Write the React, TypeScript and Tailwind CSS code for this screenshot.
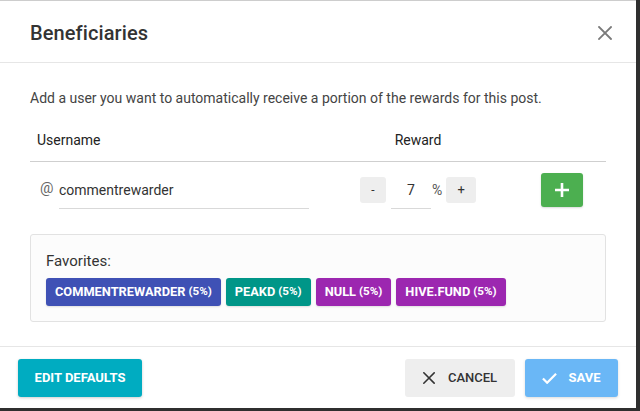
import { useState } from "react";

interface Favorite {
  name: string;
  weight: number;
  color: string;
}

const favorites: Favorite[] = [
  { name: "commentrewarder", weight: 5, color: "bg-[#3f51b5]" },
  { name: "peakd", weight: 5, color: "bg-[#009688]" },
  { name: "null", weight: 5, color: "bg-[#9c27b0]" },
  { name: "hive.fund", weight: 5, color: "bg-[#9c27b0]" },
];

const CloseIcon = ({ className }: { className?: string }) => (
  <svg viewBox="0 0 14 14" className={className} fill="none" stroke="currentColor" strokeWidth="1.8" strokeLinecap="square">
    <path d="M1 1 13 13M13 1 1 13" />
  </svg>
);

const App = () => {
  const [username, setUsername] = useState("commentrewarder");
  const [reward, setReward] = useState(7);

  return (
    <div className="w-[640px] h-[411px] bg-[#2f2f2f] font-['Roboto',sans-serif]">
      <div className="w-[636px] h-[408px] bg-white border-t border-[#cdcdcd] flex flex-col">
        {/* header */}
        <div className="h-[62px] shrink-0 flex items-center justify-between pl-[30px] pr-[23px] pt-[2px] border-b border-[#e6e6e6]">
          <h2 className="text-[20px] font-medium text-[#333] tracking-[0.1px]">Beneficiaries</h2>
          <button className="text-[#7a7a7a] w-[16px] h-[16px] flex items-center justify-center">
            <CloseIcon className="w-[14px] h-[14px]" />
          </button>
        </div>

        {/* body */}
        <div className="flex-1 px-[30px] pt-[25px]">
          <p className="text-[14px] leading-[20px] text-[#444]">
            Add a user you want to automatically receive a portion of the rewards for this post.
          </p>

          <div className="mt-[22px] flex text-[14px] leading-[20px] text-[#222] pb-[11px] border-b border-[#cfcfcf]">
            <div className="w-[330px] pl-[7px]">Username</div>
            <div className="w-[116px] text-center">Reward</div>
          </div>

          <div className="flex items-start h-[58px]">
            <div className="w-[330px] pl-[10px] pt-[18px] flex items-start">
              <span className="text-[15px] leading-[20px] text-[#666] w-[19px] -mt-[2px]">@</span>
              <input
                value={username}
                onChange={(e) => setUsername(e.target.value)}
                className="w-[250px] text-[14px] leading-[20px] text-[#333] pb-[8px] border-b border-[#d9d9d9] outline-none bg-transparent"
              />
            </div>
            <div className="pt-[15px] flex items-start">
              <button
                onClick={() => setReward(Math.max(0, reward - 1))}
                className="w-[26px] h-[26px] rounded-[3px] bg-[#eeeeee] text-[12px] text-[#333] flex items-center justify-center"
              >
                -
              </button>
              <div className="ml-[5px] w-[40px] h-[32px] border-b border-[#d9d9d9] flex justify-center pt-[3px]">
                <span className="text-[14px] leading-[20px] text-[#333]">{reward}</span>
              </div>
              <span className="ml-[1px] pt-[3px] text-[14px] leading-[20px] text-[#555]">%</span>
              <button
                onClick={() => setReward(Math.min(100, reward + 1))}
                className="ml-[4px] w-[30px] h-[26px] rounded-[3px] bg-[#eeeeee] text-[13px] text-[#333] flex items-center justify-center"
              >
                +
              </button>
            </div>
            <div className="pt-[11px] ml-[65px]">
              <button className="w-[42px] h-[34px] rounded-[3px] bg-[#4caf50] flex items-center justify-center shadow-[0_1px_2px_rgba(0,0,0,0.15)]">
                <svg viewBox="0 0 14 14" className="w-[14px] h-[14px]" fill="none" stroke="white" strokeWidth="2.6">
                  <path d="M7 0v14M0 7h14" />
                </svg>
              </button>
            </div>
          </div>

          <div className="mt-[14px] border border-[#e2e2e2] rounded-[3px] bg-[#fcfcfc] px-[15px] pt-[16px] pb-[15px]">
            <div className="text-[15px] leading-[20px] text-[#333]">Favorites:</div>
            <div className="mt-[7px] flex gap-[5px]">
              {favorites.map((f) => (
                <span
                  key={f.name}
                  className={`${f.color} h-[28px] px-[9px] rounded-[3px] text-white font-bold uppercase flex items-center gap-[3px] shadow-[0_1px_2px_rgba(0,0,0,0.12)]`}
                >
                  <span className="text-[12.8px]">{f.name}</span>
                  <span className="text-[11.6px]">({f.weight}%)</span>
                </span>
              ))}
            </div>
          </div>
        </div>

        {/* footer */}
        <div className="h-[62px] shrink-0 border-t border-[#e6e6e6] flex items-start justify-between px-[18px] pt-[12px]">
          <button className="h-[38px] w-[124px] rounded-[3px] bg-[#00acc1] text-white text-[13px] font-bold uppercase shadow-[0_1px_3px_rgba(0,0,0,0.2)]">
            Edit defaults
          </button>
          <div className="flex gap-[10px]">
            <button className="h-[38px] w-[110px] rounded-[3px] bg-[#eeeeee] text-[#333] text-[13px] font-medium uppercase flex items-center justify-center gap-[13px]">
              <CloseIcon className="w-[12px] h-[12px]" />
              Cancel
            </button>
            <button className="h-[38px] w-[93px] rounded-[3px] bg-[#6ab7f6] text-white text-[13px] font-bold uppercase flex items-center justify-center gap-[11px] shadow-[0_1px_3px_rgba(0,0,0,0.15)]">
              <svg viewBox="0 0 16 12" className="w-[15px] h-[12px]" fill="none" stroke="white" strokeWidth="2.4">
                <path d="M1 6.5 5.5 11 15 1.5" />
              </svg>
              Save
            </button>
          </div>
        </div>
      </div>
    </div>
  );
};

export default App;
